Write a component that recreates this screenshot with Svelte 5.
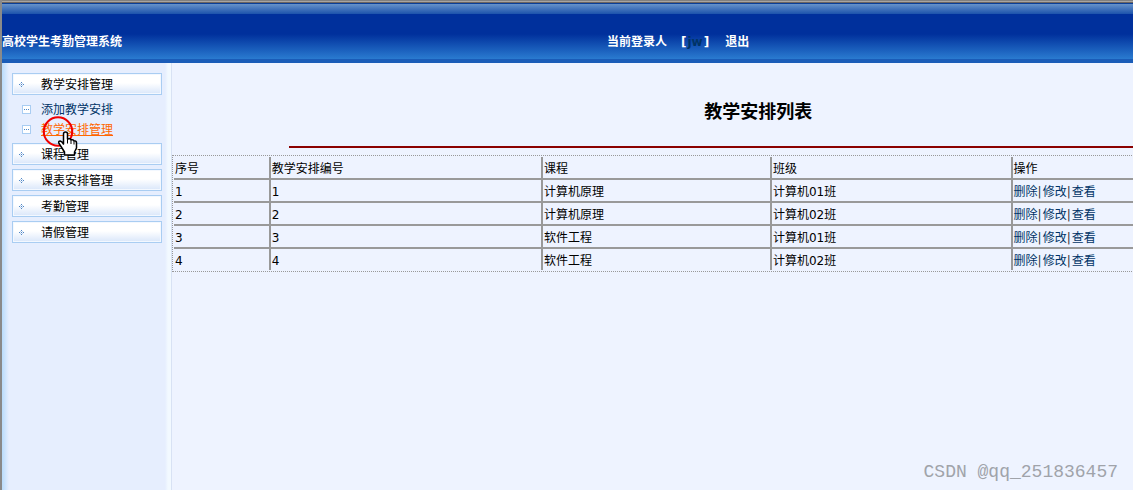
<script>
  const menus = [
    {
      name: '教学安排管理',
      items: [
        { name: '添加教学安排', active: false },
        { name: '教学安排管理', active: true },
      ],
    },
    { name: '课程管理', items: [] },
    { name: '课表安排管理', items: [] },
    { name: '考勤管理', items: [] },
    { name: '请假管理', items: [] },
  ];
  const rows = [
    { id: 1, no: 1, course: '计算机原理', group: '计算机01班' },
    { id: 2, no: 2, course: '计算机原理', group: '计算机02班' },
    { id: 3, no: 3, course: '软件工程', group: '计算机01班' },
    { id: 4, no: 4, course: '软件工程', group: '计算机02班' },
  ];
</script>

<div class="page">
  <header>
    <div class="brand">高校学生考勤管理系统</div>
    <div class="user">
      <span>当前登录人</span>
      <span>[<b class="name">jw</b>]</span>
      <a href="#logout">退出</a>
    </div>
  </header>

  <div class="body">
    <nav>
      {#each menus as menu}
        <button class="group" type="button">
          <svg width="5" height="5" viewBox="0 0 5 5" shape-rendering="crispEdges" aria-hidden="true">
            <path fill="#4f86c6" d="M2 0h1v1H2zM0 2h1v1H0zM2 2h1v1H2zM4 2h1v1H4zM2 4h1v1H2z" />
            <path fill="#b5cdea" d="M1 1h1v1H1zM3 1h1v1H3zM1 3h1v1H1zM3 3h1v1H3z" />
          </svg>
          {menu.name}
        </button>
        {#if menu.items.length}
          <ul>
            {#each menu.items as item}
              <li>
                <svg width="9" height="9" viewBox="0 0 9 9" shape-rendering="crispEdges" aria-hidden="true">
                  <rect width="9" height="9" fill="#a9cdf2" />
                  <rect x="1" y="1" width="7" height="7" fill="#fff" />
                  <path fill="#4a86c8" d="M2 4h1v1H2zM4 4h1v1H4zM6 4h1v1H6z" />
                </svg>
                <a href="#item" class:active={item.active}>{item.name}</a>
                {#if item.active}
                  <svg class="pointer" width="36" height="42" viewBox="0 0 36 42" aria-hidden="true">
                    <circle cx="16" cy="16.500" r="14.200" fill="none" stroke="#f00000" stroke-width="2" />
                    <path
                      d="M21.500 19q0-2 2-2t2 2v5q3-1 3.500 .8 2.500-.6 3 1 2.500 0 2.500 2V33l-2 4v3H22.500v-3L19 31.500l-2-3q-1-2.500 1.200-2.500 1.600 .3 3.300 3z"
                      fill="#fff"
                      stroke="#000"
                      stroke-width="1.500"
                      stroke-linejoin="round"
                    />
                    <path d="M25.500 23.500v5M29 25v4M32 26v3.500" stroke="#000" fill="none" />
                  </svg>
                {/if}
              </li>
            {/each}
          </ul>
        {/if}
      {/each}
    </nav>

    <main>
      <div class="sheet">
        <h1>教学安排列表</h1>
        <hr />
        <div class="frame">
          <table>
            <thead>
              <tr>
                <th class="c1">序号</th>
                <th class="c2">教学安排编号</th>
                <th class="c3">课程</th>
                <th class="c4">班级</th>
                <th>操作</th>
              </tr>
            </thead>
            <tbody>
              {#each rows as row}
                <tr>
                  <td>{row.id}</td>
                  <td>{row.no}</td>
                  <td>{row.course}</td>
                  <td>{row.group}</td>
                  <td class="ops"><a href="#delete">删除</a><i>|</i><a href="#edit">修改</a><i>|</i><a href="#view">查看</a></td>
                </tr>
              {/each}
            </tbody>
          </table>
        </div>
      </div>
    </main>
  </div>
  <div class="mark">CSDN @qq_251836457</div>
</div>

<style>
  :global(body) {
    margin: 0;
  }
  .page {
    box-sizing: border-box;
    position: relative;
    display: flex;
    flex-direction: column;
    min-height: 100vh;
    border-left: 2px solid #8a8a8a;
    background: #eef3ff;
    font: 12px/20px 'DejaVu Sans', 'Noto Sans CJK SC', sans-serif;
    color: #000;
    overflow: hidden;
  }
  a {
    color: #003366;
    text-decoration: none;
  }
  header {
    box-sizing: border-box;
    display: grid;
    grid-template-columns: 605fr 526fr;
    height: 63px;
    padding-top: 32px;
    border-bottom: 4px solid #1a5cb8;
    background: linear-gradient(
      #808080 0 1px,
      #a8a4a0 1px 2px,
      #6a6462 2px 3px,
      #0a3f98 3px 4px,
      #6692ca 4px,
      #1c53ac 14px,
      #00309c 14px,
      #00309c 34px,
      #2a7bd0 59px
    );
    color: #fff;
    font-weight: bold;
  }
  .user {
    display: flex;
    gap: 14px;
  }
  .name {
    padding: 0 1px;
    color: #003366;
  }
  .user a {
    color: #fff;
    margin-left: 2px;
  }
  .body {
    display: flex;
    flex: 1;
  }
  nav {
    box-sizing: border-box;
    flex: 0 0 170px;
    display: flex;
    flex-direction: column;
    gap: 4px;
    padding: 10px 9px 0 10px;
    border-right: 1px solid #d8e2f4;
    background: linear-gradient(
      90deg,
      #b9dcfc,
      #e6eefe 7px,
      #e6eefe 163px,
      #f2f9ff 166px,
      #f2f9ff
    );
  }
  .group {
    display: flex;
    align-items: center;
    gap: 17px;
    box-sizing: border-box;
    width: 150px;
    height: 22px;
    padding: 1px 6px 0;
    border: 1px solid #a9cdf2;
    background: linear-gradient(#fff 45%, #d9e6fa);
    box-shadow: inset 0 0 0 1px #f3f8ff;
    font: inherit;
    color: #000;
    white-space: nowrap;
  }
  ul {
    margin: 0;
    padding: 0 0 0 10px;
    list-style: none;
  }
  li {
    position: relative;
    display: flex;
    align-items: center;
    gap: 10px;
    height: 20px;
  }
  li a {
    padding-top: 2px;
  }
  .active {
    color: #ff6600;
    text-decoration: underline;
  }
  .pointer {
    position: absolute;
    left: 20px;
    top: -4px;
    z-index: 1;
  }
  main {
    flex: 1;
    min-width: 0;
    overflow: hidden;
  }
  .sheet {
    width: 122%;
  }
  h1 {
    margin: 0;
    padding: 35px 0 20px;
    font-size: 18px;
    line-height: 28px;
    text-align: center;
  }
  hr {
    width: 80%;
    height: 2px;
    margin: 0 auto 7px;
    border: 0;
    background: #8b0000;
  }
  .frame {
    padding: 1px;
    border: 1px dotted #999;
  }
  table {
    width: 100%;
    table-layout: fixed;
    border-spacing: 0;
  }
  th,
  td {
    box-sizing: border-box;
    height: 23px;
    padding: 4px 1px 0;
    border-top: 2px solid #999;
    border-left: 2px solid #999;
    font-weight: normal;
    line-height: 17px;
    text-align: left;
    white-space: nowrap;
  }
  th {
    height: 21px;
    border-top: 0;
  }
  th:first-child,
  td:first-child {
    border-left: 0;
  }
  .c1 {
    width: 8.1%;
  }
  .c2 {
    width: 23.3%;
  }
  .c3 {
    width: 19.6%;
  }
  .c4 {
    width: 20.6%;
  }
  .ops {
    color: #333;
  }
  i {
    font-style: normal;
    padding-right: 1px;
  }
  .mark {
    position: absolute;
    right: 15px;
    bottom: 8px;
    font: 18px/20px 'Liberation Mono', monospace;
    color: #a0a3aa;
  }
</style>
